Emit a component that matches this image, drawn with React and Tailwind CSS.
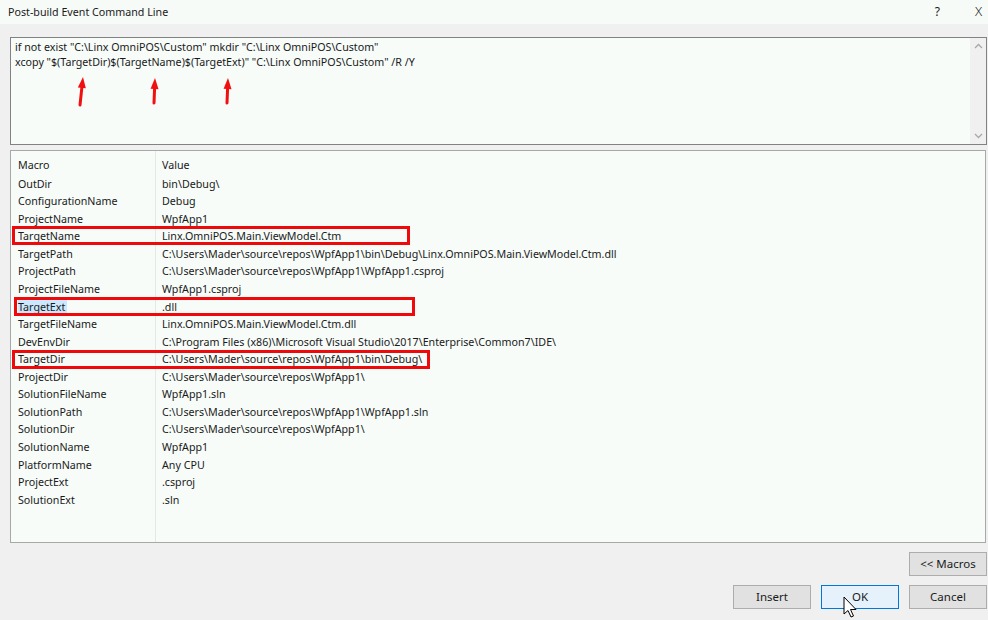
import { useState } from "react";

const macros = [
  ["OutDir", "bin\\Debug\\"],
  ["ConfigurationName", "Debug"],
  ["ProjectName", "WpfApp1"],
  ["TargetName", "Linx.OmniPOS.Main.ViewModel.Ctm"],
  ["TargetPath", "C:\\Users\\Mader\\source\\repos\\WpfApp1\\bin\\Debug\\Linx.OmniPOS.Main.ViewModel.Ctm.dll"],
  ["ProjectPath", "C:\\Users\\Mader\\source\\repos\\WpfApp1\\WpfApp1.csproj"],
  ["ProjectFileName", "WpfApp1.csproj"],
  ["TargetExt", ".dll"],
  ["TargetFileName", "Linx.OmniPOS.Main.ViewModel.Ctm.dll"],
  ["DevEnvDir", "C:\\Program Files (x86)\\Microsoft Visual Studio\\2017\\Enterprise\\Common7\\IDE\\"],
  ["TargetDir", "C:\\Users\\Mader\\source\\repos\\WpfApp1\\bin\\Debug\\"],
  ["ProjectDir", "C:\\Users\\Mader\\source\\repos\\WpfApp1\\"],
  ["SolutionFileName", "WpfApp1.sln"],
  ["SolutionPath", "C:\\Users\\Mader\\source\\repos\\WpfApp1\\WpfApp1.sln"],
  ["SolutionDir", "C:\\Users\\Mader\\source\\repos\\WpfApp1\\"],
  ["SolutionName", "WpfApp1"],
  ["PlatformName", "Any CPU"],
  ["ProjectExt", ".csproj"],
  ["SolutionExt", ".sln"],
];

function RedArrow({ x1, y1, x2, y2 }) {
  // x1,y1 = tail, x2,y2 = tip
  const dx = x2 - x1;
  const dy = y2 - y1;
  const len = Math.hypot(dx, dy);
  const ux = dx / len;
  const uy = dy / len;
  const bx = x2 - ux * 11;
  const by = y2 - uy * 11;
  const px = -uy * 4;
  const py = ux * 4;
  return (
    <g>
      <line x1={x1} y1={y1} x2={bx} y2={by} stroke="#f01010" strokeWidth="3" strokeLinecap="round" />
      <polygon points={`${x2},${y2} ${bx + px},${by + py} ${bx - px},${by - py}`} fill="#f01010" />
    </g>
  );
}

function Button({ children, primary = false, className = "" }) {
  return (
    <div
      className={
        "flex h-[24px] w-[78px] items-center justify-center border text-[11.5px] text-[#1a1a1a] " +
        (primary ? "border-[#0078d7] bg-[#e5f1fb] " : "border-[#adadad] bg-[#e1e1e1] ") +
        className
      }
    >
      {children}
    </div>
  );
}

export default function App() {
  const [selected] = useState("TargetExt");

  return (
    <div
      className="relative h-[620px] w-[988px] overflow-hidden bg-[#f0f0f0] text-[10.7px] text-[#1a1a1a]"
      style={{ fontFamily: '"Noto Sans", "Open Sans", sans-serif' }}
    >
      {/* title bar */}
      <div className="flex h-[24px] items-center bg-[#f7fbf7] pl-[8px]">
        <span className="text-[10.7px]">Post-build Event Command Line</span>
        <span className="ml-auto mr-[35px] text-[12px]">?</span>
        <span className="mr-[6px] text-[13px] font-light">X</span>
      </div>

      {/* command text box */}
      <div className="ml-[10px] mt-[13px] flex h-[108px] w-[977px] border border-[#828282] bg-[#f7fcf9]">
        <div className="flex-1 pl-[4px] pt-[2px] leading-[15px]">
          <div>if not exist "C:\Linx OmniPOS\Custom" mkdir "C:\Linx OmniPOS\Custom"</div>
          <div>xcopy "$(TargetDir)$(TargetName)$(TargetExt)" "C:\Linx OmniPOS\Custom" /R /Y</div>
        </div>
        <div className="flex w-[16px] flex-col items-center justify-between bg-[#f0f0f0] py-[5px]">
          <svg width="9" height="6" viewBox="0 0 9 6">
            <path d="M1 5 L4.5 1.5 L8 5" fill="none" stroke="#a8a8a8" strokeWidth="1.3" />
          </svg>
          <svg width="9" height="6" viewBox="0 0 9 6">
            <path d="M1 1 L4.5 4.5 L8 1" fill="none" stroke="#a8a8a8" strokeWidth="1.3" />
          </svg>
        </div>
      </div>

      {/* macro list */}
      <div className="ml-[10px] mt-[5px] flex h-[393px] w-[976px] border border-[#a8a8a8] bg-[#f7fcf9]">
        <div className="w-[145px] border-r border-[#e4e8e6]">
          <div className="flex h-[24px] items-end pb-[2px] pl-[7px]">Macro</div>
          {macros.map(([name]) => (
            <div key={name} className="flex h-[17.55px] items-center pl-[7px]">
              <span className={name === selected ? "bg-[#cce8ff] pr-[2px]" : ""}>{name}</span>
            </div>
          ))}
        </div>
        <div className="flex-1">
          <div className="flex h-[24px] items-end pb-[2px] pl-[6px]">Value</div>
          {macros.map(([name, value]) => (
            <div key={name} className="flex h-[17.55px] items-center whitespace-nowrap pl-[6px]">
              {value}
            </div>
          ))}
        </div>
      </div>

      {/* buttons */}
      <div className="mr-[1px] mt-[9px] flex justify-end">
        <Button>&lt;&lt; Macros</Button>
      </div>
      <div className="mr-[1px] mt-[9px] flex justify-end gap-[10px]">
        <Button>Insert</Button>
        <Button primary>OK</Button>
        <Button>Cancel</Button>
      </div>

      {/* annotations */}
      <div className="pointer-events-none absolute left-[12px] top-[226px] h-[19px] w-[398px] border-[3px] border-[#ee0a0a]" />
      <div className="pointer-events-none absolute left-[14px] top-[297px] h-[19px] w-[401px] border-[3px] border-[#ee0a0a]" />
      <div className="pointer-events-none absolute left-[12px] top-[350px] h-[19px] w-[418px] border-[3px] border-[#ee0a0a]" />

      <svg className="pointer-events-none absolute left-0 top-0" width="988" height="620">
        <RedArrow x1={80} y1={105} x2={83} y2={77} />
        <RedArrow x1={154} y1={103} x2={155} y2={78} />
        <RedArrow x1={227} y1={103} x2={228} y2={78} />
        {/* mouse cursor */}
        <path
          d="M844 597 L844 614 L848 610.5 L851 617 L853.5 616 L850.5 609.5 L856 609.5 Z"
          fill="#ffffff"
          stroke="#000000"
          strokeWidth="1"
          strokeLinejoin="round"
        />
      </svg>
    </div>
  );
}
